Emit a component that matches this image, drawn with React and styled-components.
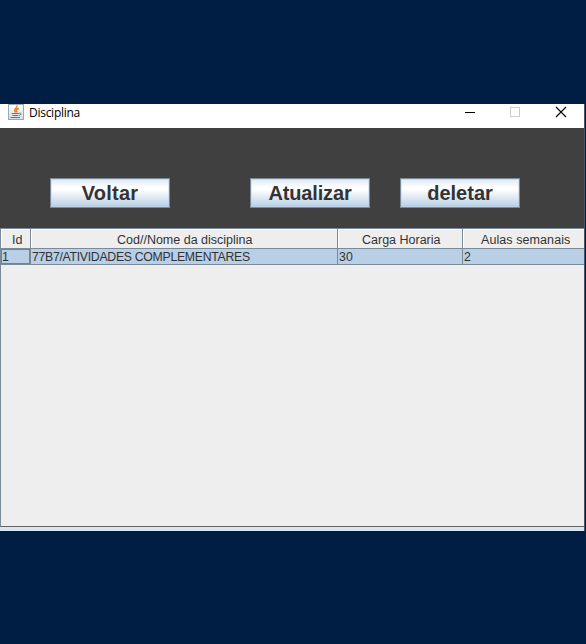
import React from "react";
import styled, { createGlobalStyle } from "styled-components";

const GlobalStyle = createGlobalStyle`
  * { box-sizing: border-box; }
  body { margin: 0; background: #001e43; overflow: hidden; }
`;

const Desktop = styled.main`
  width: 586px;
  height: 644px;
  padding-top: 104px;
  background: #001e43;
  font-family: "Liberation Sans", Arial, sans-serif;
  color: #333;
`;

const Window = styled.section`
  width: 585px;
  height: 427px;
  display: flex;
  flex-direction: column;
  border-right: 1px solid #4c5565;
  background: #d9e4f1;
`;

const TitleBar = styled.header`
  height: 24px;
  flex: none;
  display: flex;
  align-items: flex-start;
  padding-left: 8px;
  background: #fff;
`;

const Title = styled.span`
  flex: 1;
  margin-left: 5px;
  font: 12px/18px "Open Sans", "Noto Sans", sans-serif;
  letter-spacing: -0.27px;
  color: #000;
`;

const Controls = styled.div`
  display: flex;
  gap: 34px;
  padding: 2px 17px 0 0;
`;

const Icon = styled.svg`
  display: block;
  flex: none;
`;

const Toolbar = styled.nav`
  height: 100px;
  flex: none;
  display: flex;
  padding: 50px 0 0 50px;
  background: #404040;
`;

const ActionButton = styled.button`
  width: 120px;
  height: 30px;
  margin: 0 ${(p) => p.$gap}px 0 0;
  padding: 0;
  border: 1px solid #7a8a99;
  box-shadow: inset 0 0 0 1px rgba(184, 207, 229, 0.45);
  background: linear-gradient(#dde8f3 0%, #fff 30%, #fff 38%, #b8cfe5 100%);
  color: #333;
  font: bold 20px/27px "Liberation Sans", Arial, sans-serif;
  letter-spacing: ${(p) => p.$spacing}px;
`;

const TablePane = styled.div`
  height: 299px;
  flex: none;
  border: solid #7a8a99;
  border-width: 1px 0 1px 1px;
  border-bottom-color: #636363;
  background: #eee;
`;

const Row = styled.div`
  display: grid;
  grid-template-columns: 30px 307px 125px 121px;
`;

const HeaderCell = styled.div`
  height: 20px;
  border: solid #7a8a99;
  border-width: 0 ${(p) => (p.$last ? 0 : 1)}px 1px 0;
  box-shadow: inset 1px 1px #fff;
  padding-left: ${(p) => p.$indent}px;
  font-size: 12.5px;
  line-height: 22px;
  letter-spacing: ${(p) => p.$spacing}px;
  white-space: nowrap;
`;

const Cell = styled.div`
  height: 16px;
  border: solid #7a8a99;
  border-width: 0 ${(p) => (p.$last ? 0 : 1)}px 1px 0;
  padding-left: 1px;
  background: #b8cfe5;
  box-shadow: ${(p) => (p.$focused ? "inset 0 0 0 1px #6382bf" : "none")};
  font-size: 12.3px;
  line-height: 16px;
  letter-spacing: ${(p) => p.$spacing || 0}px;
  white-space: nowrap;
`;

const columns = [
  { label: "Id", indent: 11, spacing: 0 },
  { label: "Cod//Nome da disciplina", indent: 86, spacing: 0 },
  { label: "Carga Horaria", indent: 24, spacing: 0 },
  { label: "Aulas semanais", indent: 18, spacing: 0.08 },
];

const record = [
  { value: "1" },
  { value: "77B7/ATIVIDADES COMPLEMENTARES", spacing: -0.31 },
  { value: "30", spacing: 0.1 },
  { value: "2" },
];

function JavaIcon() {
  return (
    <Icon width="16" height="16" viewBox="0 0 16 16">
      <defs>
        <linearGradient id="tile" x2="0" y2="1">
          <stop stopColor="#fff" />
          <stop offset="1" stopColor="#d3dce6" />
        </linearGradient>
      </defs>
      <rect x=".5" y=".5" width="15" height="15" fill="url(#tile)" stroke="#9aa8b5" />
      <g fill="none" strokeLinecap="round">
        <path d="M9 2C9.5 4.2 4.8 4.8 7.2 8M10.5 4.5C8 5.4 8 6.3 8.8 8" stroke="#ef7d22" strokeWidth="1.4" />
        <path d="M4 9.5h6.5M4.8 11.5h5M3 13.5h8.5M11.5 9.2c2.6-.5 2 1.8-.4 2.3" stroke="#4a7ba8" strokeWidth="1" />
      </g>
    </Icon>
  );
}

export default function App() {
  return (
    <>
      <GlobalStyle />
      <Desktop>
        <Window>
          <TitleBar>
            <JavaIcon />
            <Title>Disciplina</Title>
            <Controls>
              <Icon width="12" height="12"><path d="M2 6.5h10" stroke="#000" /></Icon>
              <Icon width="12" height="12"><rect x="1.5" y="1.5" width="9" height="9" fill="none" stroke="#ccc" /></Icon>
              <Icon width="12" height="12"><path d="M1 1l10 10M11 1L1 11" stroke="#000" strokeWidth="1.1" /></Icon>
            </Controls>
          </TitleBar>
          <Toolbar>
            <ActionButton $gap={80} $spacing={0.2}>Voltar</ActionButton>
            <ActionButton $gap={30} $spacing={-0.15}>Atualizar</ActionButton>
            <ActionButton $gap={0} $spacing={0}>deletar</ActionButton>
          </Toolbar>
          <TablePane>
            <Row>
              {columns.map((c, i) => (
                <HeaderCell key={c.label} $indent={c.indent} $spacing={c.spacing} $last={i === 3}>
                  {c.label}
                </HeaderCell>
              ))}
            </Row>
            <Row>
              {record.map((c, i) => (
                <Cell key={i} $spacing={c.spacing} $focused={i === 0} $last={i === 3}>
                  {c.value}
                </Cell>
              ))}
            </Row>
          </TablePane>
        </Window>
      </Desktop>
    </>
  );
}
